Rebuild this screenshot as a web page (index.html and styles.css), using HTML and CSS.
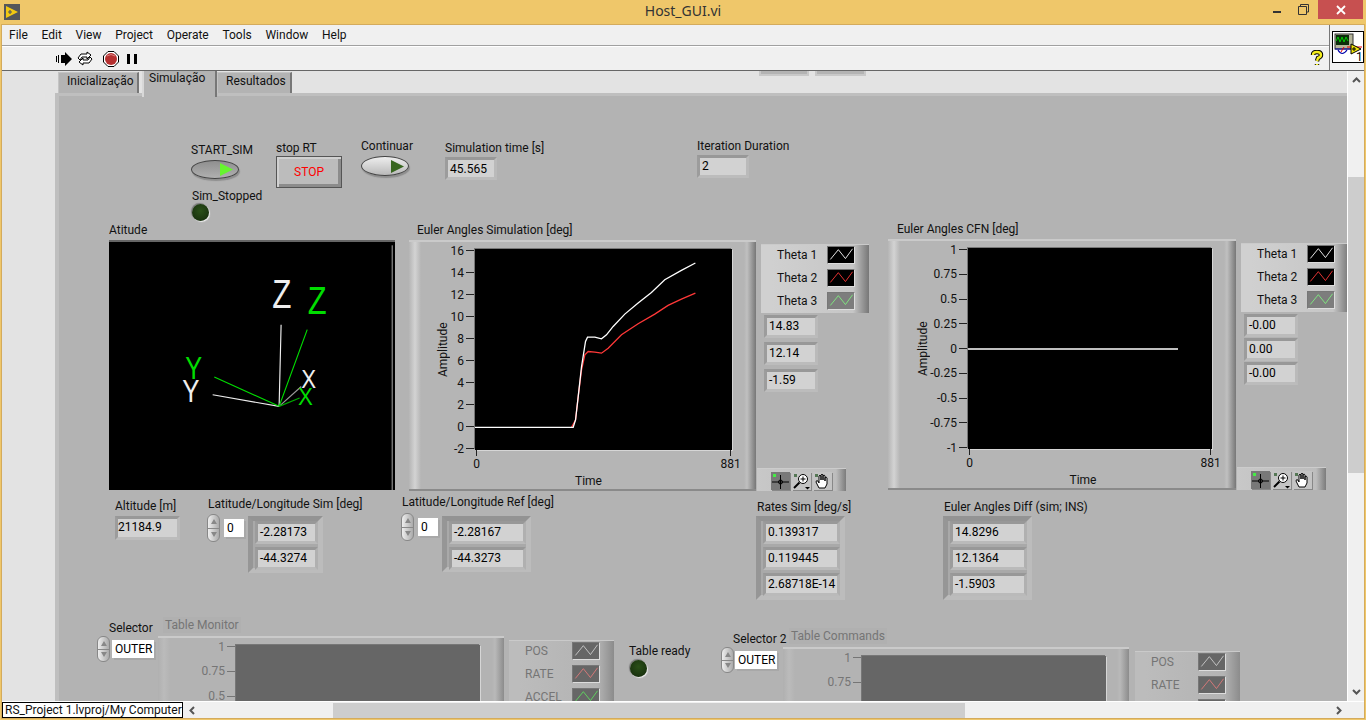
FILE: index.html
```html
<!DOCTYPE html>
<html lang="pt">
<head>
    <meta charset="UTF-8">
    <title>Host_GUI.vi</title>
    <link rel="stylesheet" href="styles.css">
</head>
<body>
<svg class="defs" width="0" height="0">
    <symbol id="zigzag" viewBox="0 0 28 18"><polyline points="2,14 11,3 19,13 27,2" fill="none" stroke="currentColor"/></symbol>
</svg>
<div class="window">
    <div class="titlebar">
        <svg class="app-icon" width="16" height="16" viewBox="0 0 16 16">
            <rect width="16" height="16" fill="#55565a"/>
            <path d="M2 2 L14 8 L2 14 Z" fill="#f2c811"/>
            <path d="M4 8 H8 M6 6 V10" stroke="#55565a" stroke-width="1.2"/>
        </svg>
        <div class="title">Host_GUI.vi</div>
        <div class="wincontrols">
            <div class="win-min"></div>
            <svg class="win-restore" width="11" height="11" viewBox="0 0 11 11">
                <path d="M2.5 2.5 V0.5 H10.5 V8 H8.5 M0.5 2.5 H8.5 V10.5 H0.5 Z" fill="none" stroke="#333"/>
            </svg>
            <div class="win-close">
                <svg width="10" height="10" viewBox="0 0 10 10"><path d="M1 1 L9 9 M9 1 L1 9" stroke="#fff" stroke-width="1.8"/></svg>
            </div>
        </div>
    </div>
    <div class="frame">
        <div class="topbars">
            <div class="bars-left">
                <div class="menubar">
                    <span>File</span><span>Edit</span><span>View</span><span>Project</span><span>Operate</span><span>Tools</span><span>Window</span><span>Help</span>
                </div>
                <div class="toolbar">
                    <svg class="tool-run" width="16" height="14" viewBox="0 0 16 14">
                        <path d="M5 3 H9 V0 L16 7 L9 14 V11 H5 Z" fill="#000"/>
                        <path d="M0 4 H1 V10 H0 Z M2 3 H3 V11 H2 Z" fill="#000"/>
                    </svg>
                    <svg class="tool-cycle" width="16" height="15" viewBox="0 0 16 15">
                        <path d="M1 7 L4 3 H10 V1 L14 4 L10 8 V6 H5 L3 9 Z M15 8 L12 12 H6 V14 L2 11 L6 7 V9 H11 L13 6 Z" fill="#fff" stroke="#000"/>
                    </svg>
                    <svg class="tool-stop" width="16" height="16" viewBox="0 0 16 16">
                        <path d="M5 .5 H11 L15.5 5 V11 L11 15.5 H5 L.5 11 V5 Z" fill="#fff" stroke="#000"/>
                        <circle cx="8" cy="8" r="6" fill="#b52f2f"/>
                        <path d="M4 5 Q8 2 12 5" fill="none" stroke="#d98080"/>
                    </svg>
                    <div class="tool-pause"><i></i><i></i></div>
                    <svg class="tool-help" width="14" height="17" viewBox="0 0 14 17">
                        <path d="M3 5 Q3 2 7 2 Q11 2 11 5 Q11 7 8 8 L7 11 M7 14 V15" fill="none" stroke="#000" stroke-width="4.4"/>
                        <path d="M3 5 Q3 2 7 2 Q11 2 11 5 Q11 7 8 8 L7 11 M7 14 V15" fill="none" stroke="#f5ee1e" stroke-width="2.4"/>
                    </svg>
                </div>
            </div>
            <div class="vi-slot">
                <svg class="vi-icon" width="32" height="32" viewBox="0 0 32 32">
                    <rect x=".5" y=".5" width="31" height="31" fill="#fff" stroke="#000"/>
                    <rect x="3" y="3" width="18" height="15" fill="#b5b59a" stroke="#333"/>
                    <rect x="4" y="4" width="13" height="10" fill="#0b2d0b"/>
                    <path d="M4 10 L6 6 L8 11 L10 6 L12 11 L14 6 L16 10" fill="none" stroke="#0c0"/>
                    <path d="M3 18 H19 M6 19 Q10 26 15 19" fill="none" stroke="#00a" stroke-width="1.2"/>
                    <path d="M9 21 L12 16 M15 16 H30" fill="none" stroke="#e00"/>
                    <path d="M19 13 L29 18 L19 23 Z" fill="#f2e60a" stroke="#000"/>
                    <path d="M20 18 H24 M22 16 V20" stroke="#000"/>
                    <text class="vi-num" x="24" y="30">1</text>
                </svg>
            </div>
        </div>
        <div class="middle">
            <div class="workspace">
                <div class="tabs">
                    <div class="tab tab-init">Inicialização</div>
                    <div class="tab tab-on">Simulação</div>
                    <div class="tab tab-res">Resultados</div>
                </div>
                <div class="tabpanel"></div>

                <div class="canvas">
                    <div class="clipped clip-a"></div>
                    <div class="clipped clip-b"></div>

                    <div class="lbl l-start">START_SIM</div>
                    <div class="oval oval-on"><svg width="13" height="13" viewBox="0 0 13 13"><path d="M0 0 L13 6.500 L0 13 Z" fill="#66f52e"/></svg></div>
                    <div class="lbl l-stopped">Sim_Stopped</div>
                    <div class="led led-stopped"></div>
                    <div class="lbl l-stoprt">stop RT</div>
                    <div class="stopbtn">STOP</div>
                    <div class="lbl l-cont">Continuar</div>
                    <div class="oval oval-off"><svg width="13" height="13" viewBox="0 0 13 13"><path d="M0 0 L13 6.500 L0 13 Z" fill="#38661f"/></svg></div>
                    <div class="lbl l-simtime">Simulation time [s]</div>
                    <div class="num n-simtime">45.565</div>
                    <div class="lbl l-iter">Iteration Duration</div>
                    <div class="num n-iter">2</div>

                    <div class="lbl l-att">Atitude</div>
                    <svg class="attitude" width="286" height="250" viewBox="27 60 858 750">
                        <line x1="880" y1="70" x2="880" y2="810" stroke="#aaa" stroke-width="3"/>
                        <g stroke-width="3.5">
                            <path d="M538 557 L544 310 M538 557 L337 522" stroke="#eee"/>
                            <path d="M538 557 L605 497" stroke="#999"/>
                            <path d="M538 557 L623 325 M538 557 L342 468" stroke="#0d0"/>
                            <path d="M538 557 L600 532" stroke="#0a0"/>
                        </g>
                        <text class="ax-w" x="517" y="261" font-size="124" textLength="58" lengthAdjust="spacingAndGlyphs">Z</text>
                        <text class="ax-g" x="625" y="279" font-size="118" textLength="57" lengthAdjust="spacingAndGlyphs">Z</text>
                        <text class="ax-w" x="245" y="544" font-size="95" textLength="52" lengthAdjust="spacingAndGlyphs">Y</text>
                        <text class="ax-g" x="254" y="474" font-size="95" textLength="51" lengthAdjust="spacingAndGlyphs">Y</text>
                        <text class="ax-w" x="605" y="503" font-size="80" textLength="45" lengthAdjust="spacingAndGlyphs">X</text>
                        <text class="ax-g" x="595" y="552" font-size="72" textLength="45" lengthAdjust="spacingAndGlyphs">X</text>
                    </svg>

                    <div class="lbl l-eusim">Euler Angles Simulation [deg]</div>
                    <div class="graph g-sim">
                        <div class="amp">Amplitude</div>
                        <div class="yaxis"><span>16</span><span>14</span><span>12</span><span>10</span><span>8</span><span>6</span><span>4</span><span>2</span><span>0</span><span>-2</span></div>
                        <div class="plot">
                            <svg width="257" height="201" viewBox="210 88 772 602" preserveAspectRatio="none">
                                <polyline class="tr-r" points="500,622 512,600 520,530 530,450 540,405 550,395 570,397 590,400 610,385 650,345 700,312 750,283 790,257 830,238 872,220"/>
                                <polyline class="tr-w" points="210,622 505,622 512,600 520,530 530,440 542,365 548,352 570,352 590,357 605,345 625,320 660,283 700,250 740,218 780,180 830,152 872,130"/>
                            </svg>
                        </div>
                        <div class="xaxis"><span>0</span><span>881</span></div>
                        <div class="xname">Time</div>
                    </div>
                    <div class="legend leg-sim">
                        <div class="leg-row"><span>Theta 1</span><svg class="sw sw-w"><use href="#zigzag"/></svg></div>
                        <div class="leg-row"><span>Theta 2</span><svg class="sw sw-r"><use href="#zigzag"/></svg></div>
                        <div class="leg-row"><span>Theta 3</span><svg class="sw sw-g"><use href="#zigzag"/></svg></div>
                    </div>
                    <div class="numcol col-sim">
                        <div class="num">14.83</div>
                        <div class="num">12.14</div>
                        <div class="num">-1.59</div>
                    </div>
                    <div class="palette pal-sim">
                        <div class="pbtn pbtn-on"><svg width="19" height="18" viewBox="0 0 19 18"><path d="M1 10 H18 M9.5 3 V17" stroke="#000"/><circle cx="9.5" cy="10" r="2" fill="none" stroke="#000"/><rect x="2" y="2" width="3" height="3" fill="#4e4"/></svg></div>
                        <div class="pbtn"><svg width="19" height="18" viewBox="0 0 19 18"><circle cx="11" cy="7" r="4.5" fill="#fff" stroke="#000"/><path d="M11 4.500 V9.500 M8.500 7 H13.500" stroke="#000"/><path d="M7.500 10.500 L2 16" stroke="#000" stroke-width="2"/><path d="M13 15 H18 L15.500 17.500 Z" fill="#000"/><rect x="2" y="2" width="3" height="3" fill="#575"/></svg></div>
                        <div class="pbtn"><svg width="19" height="18" viewBox="0 0 19 18"><path d="M6 16 L3 10 Q3 8 5 9 L6 11 V4 Q7 2.500 8 4 V8 V3 Q9 1.500 10 3 V8 V3.500 Q11.500 2.500 12 4 V9 V5.500 Q13.500 4.500 14 6 V12 L12 16 Z" fill="#fff" stroke="#000"/><rect x="2" y="2" width="3" height="3" fill="#575"/></svg></div>
                    </div>

                    <div class="lbl l-eucfn">Euler Angles CFN [deg]</div>
                    <div class="graph g-cfn">
                        <div class="amp">Amplitude</div>
                        <div class="yaxis"><span>1</span><span>0.75</span><span>0.5</span><span>0.25</span><span>0</span><span>-0.25</span><span>-0.5</span><span>-0.75</span><span>-1</span></div>
                        <div class="plot">
                            <svg width="244" height="201" viewBox="0 0 244 201"><line class="tr-w" x1="0" y1="101" x2="210" y2="101"/></svg>
                        </div>
                        <div class="xaxis"><span>0</span><span>881</span></div>
                        <div class="xname">Time</div>
                    </div>
                    <div class="legend leg-cfn">
                        <div class="leg-row"><span>Theta 1</span><svg class="sw sw-w"><use href="#zigzag"/></svg></div>
                        <div class="leg-row"><span>Theta 2</span><svg class="sw sw-r"><use href="#zigzag"/></svg></div>
                        <div class="leg-row"><span>Theta 3</span><svg class="sw sw-g"><use href="#zigzag"/></svg></div>
                    </div>
                    <div class="numcol col-cfn">
                        <div class="num">-0.00</div>
                        <div class="num">0.00</div>
                        <div class="num">-0.00</div>
                    </div>
                    <div class="palette pal-cfn">
                        <div class="pbtn pbtn-on"><svg width="19" height="18" viewBox="0 0 19 18"><path d="M1 10 H18 M9.5 3 V17" stroke="#000"/><circle cx="9.5" cy="10" r="2" fill="none" stroke="#000"/><rect x="2" y="2" width="3" height="3" fill="#4e4"/></svg></div>
                        <div class="pbtn"><svg width="19" height="18" viewBox="0 0 19 18"><circle cx="11" cy="7" r="4.5" fill="#fff" stroke="#000"/><path d="M11 4.500 V9.500 M8.500 7 H13.500" stroke="#000"/><path d="M7.500 10.500 L2 16" stroke="#000" stroke-width="2"/><path d="M13 15 H18 L15.500 17.500 Z" fill="#000"/><rect x="2" y="2" width="3" height="3" fill="#575"/></svg></div>
                        <div class="pbtn"><svg width="19" height="18" viewBox="0 0 19 18"><path d="M6 16 L3 10 Q3 8 5 9 L6 11 V4 Q7 2.500 8 4 V8 V3 Q9 1.500 10 3 V8 V3.500 Q11.500 2.500 12 4 V9 V5.500 Q13.500 4.500 14 6 V12 L12 16 Z" fill="#fff" stroke="#000"/><rect x="2" y="2" width="3" height="3" fill="#575"/></svg></div>
                    </div>

                    <div class="lbl l-alt">Altitude [m]</div>
                    <div class="num n-alt">21184.9</div>

                    <div class="lbl l-latsim">Latitude/Longitude Sim [deg]</div>
                    <div class="idx idx-sim"><div class="spin"></div><div class="idxbox">0</div></div>
                    <div class="array arr-latsim"><div class="num">-2.28173</div><div class="num">-44.3274</div></div>

                    <div class="lbl l-latref">Latitude/Longitude Ref [deg]</div>
                    <div class="idx idx-ref"><div class="spin"></div><div class="idxbox">0</div></div>
                    <div class="array arr-latref"><div class="num">-2.28167</div><div class="num">-44.3273</div></div>

                    <div class="lbl l-rates">Rates Sim [deg/s]</div>
                    <div class="array arr-rates"><div class="num">0.139317</div><div class="num">0.119445</div><div class="num">2.68718E-14</div></div>

                    <div class="lbl l-diff">Euler Angles Diff (sim; INS)</div>
                    <div class="array arr-diff"><div class="num">14.8296</div><div class="num">12.1364</div><div class="num">-1.5903</div></div>

                    <div class="lbl l-sel">Selector</div>
                    <div class="idx sel-a"><div class="spin"></div><div class="idxbox">OUTER</div></div>
                    <div class="lbl lbl-off l-mon">Table Monitor</div>
                    <div class="graph off g-mon">
                        <div class="amp"></div>
                        <div class="yaxis"><span>1</span><span>0.75</span><span>0.5</span><span></span><span></span><span></span><span></span><span></span><span></span></div>
                        <div class="plot"></div>
                    </div>
                    <div class="legend off leg-mon">
                        <div class="leg-row"><span>POS</span><svg class="sw sw-w"><use href="#zigzag"/></svg></div>
                        <div class="leg-row"><span>RATE</span><svg class="sw sw-r"><use href="#zigzag"/></svg></div>
                        <div class="leg-row"><span>ACCEL</span><svg class="sw sw-g"><use href="#zigzag"/></svg></div>
                    </div>

                    <div class="lbl l-ready">Table ready</div>
                    <div class="led led-ready"></div>

                    <div class="lbl l-sel2">Selector 2</div>
                    <div class="idx sel-b"><div class="spin"></div><div class="idxbox">OUTER</div></div>
                    <div class="lbl lbl-off l-cmd">Table Commands</div>
                    <div class="graph off g-cmd">
                        <div class="amp"></div>
                        <div class="yaxis"><span>1</span><span>0.75</span><span></span><span></span><span></span><span></span><span></span><span></span><span></span></div>
                        <div class="plot"></div>
                    </div>
                    <div class="legend off leg-cmd">
                        <div class="leg-row"><span>POS</span><svg class="sw sw-w"><use href="#zigzag"/></svg></div>
                        <div class="leg-row"><span>RATE</span><svg class="sw sw-r"><use href="#zigzag"/></svg></div>
                        <div class="leg-row"><svg class="sw sw-g sw-last"><use href="#zigzag"/></svg></div>
                    </div>
                </div>
            </div>
            <div class="vscroll">
                <svg class="arrow" width="9" height="6" viewBox="0 0 9 6"><path d="M1 5 L4.500 1.500 L8 5" fill="none" stroke="#555" stroke-width="2"/></svg>
                <div class="vthumb"></div>
                <svg class="arrow arrow-down" width="9" height="6" viewBox="0 0 9 6"><path d="M1 1 L4.500 4.500 L8 1" fill="none" stroke="#555" stroke-width="2"/></svg>
            </div>
        </div>
        <div class="bottombar">
            <div class="status">RS_Project 1.lvproj/My Computer</div>
            <svg class="arrow-left" width="6" height="9" viewBox="0 0 6 9"><path d="M5 1 L1.500 4.500 L5 8" fill="none" stroke="#555" stroke-width="2"/></svg>
            <div class="hthumb"></div>
            <svg class="arrow-right" width="6" height="9" viewBox="0 0 6 9"><path d="M1 1 L4.500 4.500 L1 8" fill="none" stroke="#555" stroke-width="2"/></svg>
        </div>
    </div>
</div>
</body>
</html>
```

FILE: styles.css
```css
* {
    box-sizing: border-box;
}
body {
    margin: 0;
    width: 1366px;
    height: 720px;
    overflow: hidden;
    font-family: Roboto, "Liberation Sans", sans-serif;
    font-size: 12px;
    color: #111;
}
.defs {
    position: absolute;
}
.window {
    width: 1366px;
    height: 720px;
    background-color: #efc76a;
    display: flex;
    flex-direction: column;
}

/* title bar */
.titlebar {
    height: 24px;
    flex: none;
    display: flex;
    align-items: flex-start;
    position: relative;
}
.app-icon {
    margin: 4px 0 0 4px;
}
.title {
    position: absolute;
    left: 0;
    right: 0;
    top: 1px;
    text-align: center;
    font-family: "Noto Sans", sans-serif;
    font-size: 14px;
    line-height: 20px;
    color: #333;
}
.wincontrols {
    margin-left: auto;
    display: flex;
    align-items: flex-start;
    margin-right: 3px;
    position: relative;
}
.win-min {
    width: 8px;
    height: 2px;
    background-color: #333;
    margin-top: 11px;
}
.win-restore {
    margin: 4px 9px 0 17px;
}
.win-close {
    width: 45px;
    height: 19px;
    background-color: #c75050;
    display: flex;
    align-items: center;
    justify-content: center;
}

.frame {
    flex: 1;
    margin: 0 2px 2px;
    box-shadow: 0 0 0 1px #d4ab5c;
    margin-top: 1px;
    display: flex;
    flex-direction: column;
    background-color: #f0f0f0;
    min-height: 0;
}
.topbars {
    height: 46px;
    flex: none;
    display: flex;
    border-bottom: 1px solid #666;
}
.bars-left {
    flex: 1;
    display: flex;
    flex-direction: column;
}
.menubar {
    height: 21px;
    display: flex;
    gap: 13.7px;
    padding-left: 7px;
    align-items: center;
    border-bottom: 1px solid #a0a0a0;
}
.toolbar {
    flex: 1;
    display: flex;
    align-items: center;
    padding-left: 54px;
    border-top: 1px solid #fff;
    position: relative;
}
.tool-run {
    margin-right: 5px;
}
.tool-stop {
    margin-left: 10px;
}
.tool-pause {
    display: flex;
    gap: 4px;
    margin-left: 8px;
}
.tool-pause i {
    display: block;
    width: 3px;
    height: 10px;
    background-color: #000;
}
.tool-help {
    margin-left: auto;
    margin-right: 5px;
}
.vi-slot {
    width: 35px;
    border-left: 1px solid #777;
    padding: 6px 0 0 2px;
}
.vi-icon {
    display: block;
}
.vi-num {
    font-size: 12px;
    fill: #000;
}

.middle {
    flex: 1;
    display: flex;
    min-height: 0;
}
.workspace {
    flex: 1;
    position: relative;
    overflow: hidden;
    background-color: #e3e3e3;
    display: flex;
    flex-direction: column;
}
.tabs {
    display: flex;
    height: 22px;
    flex: none;
    padding-left: 56px;
    align-items: flex-start;
    position: relative;
    z-index: 1;
}
.tab {
    height: 21px;
    padding-left: 8px;
    line-height: 17px;
    background-color: #b3b3b3;
    border-right: 2px solid #777;
    border-left: 1px solid #c4c4c4;
    border-top: 1px solid #c4c4c4;
    margin-top: 1px;
}
.tab-init {
    width: 81px;
}
.tab-on {
    width: 75px;
    height: 26px;
    margin: 0 0 0 3px;
    padding-left: 5px;
    line-height: 15px;
    border-left: 2px solid #d8d8d8;
    border-top: 0;
}
.tab-res {
    width: 75px;
}
.tabpanel {
    flex: 1;
    margin-left: 53px;
    background-color: #b3b3b3;
    border-top: 3px solid #bfbfbf;
    border-left: 4px solid #bfbfbf;
}

/* front panel, child coordinates are window coordinates */
.canvas {
    position: absolute;
    left: -2px;
    top: -71px;
    width: 1366px;
    height: 720px;
}
.canvas > * {
    position: absolute;
}
.clipped {
    top: 60px;
    height: 16px;
    background-color: #b3b3b3;
    border: 2px solid #c8c8c8;
}
.clip-a {
    left: 759px;
    width: 50px;
}
.clip-b {
    left: 815px;
    width: 51px;
}
.lbl {
    line-height: 16px;
    white-space: nowrap;
    margin-top: 1px;
}
.lbl-off {
    color: #757575;
    background-color: #b0b0b0;
    padding: 0 2px;
}
.l-start { left: 191px; top: 141px; }
.l-stopped { left: 192px; top: 187px; }
.l-stoprt { left: 276px; top: 139px; }
.l-cont { left: 361px; top: 137px; }
.l-simtime { left: 445px; top: 139px; }
.l-iter { left: 697px; top: 137px; }
.l-att { left: 109px; top: 221px; }
.l-eusim { left: 417px; top: 221px; }
.l-eucfn { left: 897px; top: 220px; }
.l-alt { left: 115px; top: 497px; }
.l-latsim { left: 208px; top: 495px; }
.l-latref { left: 402px; top: 493px; }
.l-rates { left: 757px; top: 498px; }
.l-diff { left: 944px; top: 498px; }
.l-sel { left: 109px; top: 619px; }
.l-mon { left: 163px; top: 616px; }
.l-ready { left: 629px; top: 642px; }
.l-sel2 { left: 733px; top: 630px; }
.l-cmd { left: 789px; top: 627px; }

.oval {
    border-radius: 50%;
    border: 1px solid #444;
    display: flex;
    align-items: center;
    justify-content: flex-end;
    box-shadow: 1px 2px 1px #8e8e8e;
}
.oval-on {
    left: 191px;
    top: 160px;
    width: 48px;
    height: 19px;
    background: linear-gradient(#8f8f8f, #b0b0b0);
    padding-right: 5px;
}
.oval-off {
    left: 361px;
    top: 156px;
    width: 48px;
    height: 20px;
    background: linear-gradient(#eee, #b9b9b9);
    padding-right: 4px;
}
.stopbtn {
    left: 276px;
    top: 156px;
    width: 66px;
    height: 32px;
    border: 1px solid #555;
    background-color: #bcbcbc;
    box-shadow: inset 2px 2px 0 #d0d0d0, inset -3px -3px 0 #8c8c8c;
    color: #f00;
    text-align: center;
    line-height: 30px;
}
.led {
    width: 17px;
    height: 17px;
    border-radius: 50%;
    background: radial-gradient(circle at 50% 40%, #2a5018, #14280c);
    box-shadow: 1px 1px 1px #eee, -1px -1px 1px #777;
}
.led-stopped { left: 192px; top: 204px; }
.led-ready { left: 630px; top: 660px; }

.num {
    background-color: #d2d2d2;
    border: 3px solid;
    border-color: #989898 #bababa #bcbcbc #9c9c9c;
    height: 23px;
    line-height: 17px;
    padding-left: 2px;
    color: #000;
    white-space: nowrap;
}
.n-simtime { left: 445px; top: 157px; width: 52px; line-height: 18px; }
.n-iter { left: 697px; top: 155px; width: 52px; }
.n-alt { left: 115px; top: 516px; width: 65px; height: 24px; padding-left: 0; }

.attitude {
    left: 109px;
    top: 240px;
    background-color: #000;
    border-top: 2px solid #666;
}
.attitude text {
    font-family: "Liberation Sans", sans-serif;
}
.ax-w { fill: #eee; }
.ax-g { fill: #0d0; }

/* graphs */
.graph {
    display: grid;
    height: 251px;
    padding-top: 7px;
    grid-template-rows: 201px 23px 16px;
    border-top: 2px solid #cacaca;
    border-bottom: 2px solid #8a8a8a;
    background:
        linear-gradient(90deg, #b5b5b5, #d3d3d3 6px, #b5b5b5 12px, #b5b5b5 calc(100% - 12px), #c0c0c0 calc(100% - 9px), #777 100%);
}
.g-sim {
    left: 409px;
    top: 240px;
    width: 347px;
    padding-left: 24px;
    grid-template-columns: 20px 22px 257px;
}
.g-sim .xname {
    padding-right: 30px;
}
.g-cfn {
    left: 888px;
    top: 239px;
    width: 348px;
    padding-left: 25px;
    grid-template-columns: 20px 35px 244px;
}
.g-cfn .xname {
    padding-right: 14px;
}
.g-mon {
    left: 158px;
    top: 636px;
    width: 346px;
    padding-left: 25px;
    grid-template-columns: 20px 33px 244px;
}
.g-cmd {
    left: 783px;
    top: 647px;
    width: 346px;
    padding-left: 25px;
    grid-template-columns: 20px 34px 244px;
}
.amp {
    writing-mode: vertical-rl;
    transform: rotate(180deg);
    text-align: center;
    line-height: 20px;
}
.yaxis {
    display: flex;
    flex-direction: column;
    justify-content: space-between;
    align-items: flex-end;
    padding: 1px 1px 1px 0;
}
.yaxis span {
    height: 1px;
    display: flex;
    align-items: center;
    white-space: nowrap;
}
.yaxis span::after {
    content: "";
    width: 8px;
    height: 1px;
    margin-left: 2px;
    background-color: #222;
}
.plot {
    background-color: #000;
    box-shadow: 1px 1px 0 #d6d6d6, -1px -1px 0 #777;
}
.plot svg {
    display: block;
}
.tr-w,
.tr-r {
    fill: none;
    stroke-width: 1.3;
    vector-effect: non-scaling-stroke;
}
.tr-w { stroke: #fff; }
.tr-r { stroke: #ff3838; }
.xaxis {
    grid-column: 3;
    display: flex;
    justify-content: space-between;
    padding: 0 1px;
}
.xaxis span {
    width: 1px;
    display: flex;
    flex-direction: column;
    align-items: center;
    line-height: 16px;
    height: 22px;
}
.xaxis span::before {
    content: "";
    width: 1px;
    height: 6px;
    flex: none;
    background-color: #222;
}
.xname {
    grid-column: 3;
    text-align: center;
    line-height: 16px;
}

.legend {
    display: flex;
    flex-direction: column;
    gap: 5px;
    padding: 1px 14px 0 16px;
    background: linear-gradient(90deg, #d0d0d0 10px, #c6c6c6 calc(100% - 16px), #777 100%);
    border-top: 1px solid #cacaca;
}
.leg-row {
    height: 18px;
    flex: none;
    display: flex;
    justify-content: space-between;
    align-items: center;
}
.sw {
    width: 28px;
    height: 18px;
    border: 1px solid;
    border-color: #777 #ddd #ddd #777;
}
.sw-last {
    margin-left: auto;
}
.sw-w { background-color: #000; color: #fff; }
.sw-r { background-color: #000; color: #ff3838; }
.sw-g { background-color: #7d7d7d; color: #7fef7f; }
.leg-sim { left: 761px; top: 244px; width: 108px; height: 69px; }
.leg-cfn { left: 1241px; top: 243px; width: 108px; height: 69px; }

.off {
    color: #757575;
}
.g-mon .plot,
.g-cmd .plot {
    background-color: #666;
}
.off .sw-w { background-color: #666; color: #ccc; }
.off .sw-r { background-color: #666; color: #e07a7a; }
.off .sw-g { background-color: #666; color: #5fdc5f; }
.off .yaxis span::after {
    background-color: #757575;
}
.off.graph {
    background:
        linear-gradient(90deg, #b0b0b0, #bbb 6px, #b3b3b3 12px, #b3b3b3 calc(100% - 12px), #b9b9b9 calc(100% - 9px), #8c8c8c 100%);
}
.off.legend {
    background: linear-gradient(90deg, #bcbcbc 10px, #b3b3b3 calc(100% - 16px), #8c8c8c 100%);
}
.leg-mon { left: 509px; top: 640px; width: 105px; height: 80px; }
.leg-cmd { left: 1135px; top: 651px; width: 105px; height: 80px; }

.numcol {
    display: flex;
    flex-direction: column;
    gap: 4px;
    width: 54px;
}
.col-sim { left: 764px; top: 315px; }
.col-cfn { left: 1244px; top: 314px; gap: 1px; }

.palette {
    width: 89px;
    height: 23px;
    padding: 3px 14px 0;
    display: flex;
    gap: 2px;
    background: linear-gradient(90deg, #c8c8c8, #bdbdbd calc(100% - 10px), #7c7c7c 100%);
    border-top: 1px solid #ccc;
}
.pal-sim { left: 757px; top: 468px; }
.pal-cfn { left: 1237px; top: 467px; }
.pbtn {
    width: 19px;
    height: 18px;
    background-color: #c4c4c4;
    box-shadow: 1px 1px 0 #888;
}
.pbtn svg {
    display: block;
}
.pbtn-on {
    background-color: #787878;
}

.idx {
    display: flex;
    align-items: center;
    gap: 4px;
    height: 28px;
}
.spin {
    width: 13px;
    height: 100%;
    border-radius: 6px;
    border: 1px solid #888;
    background:
        linear-gradient(#888, #888) center / 100% 1px no-repeat,
        linear-gradient(90deg, #eee, #aaa);
    position: relative;
}
.spin::before,
.spin::after {
    content: "";
    position: absolute;
    left: 2.5px;
    border: 3px solid transparent;
}
.spin::before {
    top: 1px;
    border-bottom: 5px solid #888;
}
.spin::after {
    bottom: 1px;
    border-top: 5px solid #888;
}
.idxbox {
    background-color: #fff;
    color: #000;
    height: 18px;
    line-height: 18px;
    padding-left: 3px;
    box-shadow: 2px 2px 0 #a8a8a8;
}
.idx-sim { left: 207px; top: 514px; }
.idx-sim .idxbox { width: 20px; }
.idx-ref { left: 401px; top: 513px; }
.idx-ref .idxbox { width: 20px; }
.sel-a { left: 97px; top: 636px; height: 26px; gap: 2px; }
.sel-a .idxbox { width: 42px; }
.sel-b { left: 721px; top: 647px; height: 26px; gap: 1px; }
.sel-b .idxbox { width: 42px; }

.array {
    background-color: #a9a9a9;
    border: 5px solid;
    border-color: #939393 #bcbcbc #bcbcbc #969696;
    padding-left: 2px;
    display: flex;
    flex-direction: column;
    gap: 3px;
}
.array .num {
    height: 23px;
    border-color: #989898 #b0b0b0 #bababa #9c9c9c;
}
.arr-latsim { left: 248px; top: 516px; width: 75px; height: 57px; }
.arr-latref { left: 442px; top: 516px; width: 89px; height: 56px; }
.arr-rates { left: 756px; top: 516px; width: 89px; height: 84px; }
.arr-diff { left: 943px; top: 516px; width: 89px; height: 84px; }

/* scrollbars */
.vscroll {
    width: 17px;
    flex: none;
    background-color: #f0f0f0;
    border-left: 1px solid #fff;
    display: flex;
    flex-direction: column;
    align-items: center;
    padding-top: 6px;
}
.arrow {
    flex: none;
}
.vthumb {
    width: 16px;
    height: 296px;
    margin-top: 94px;
    background-color: #cdcdcd;
}
.arrow-down {
    margin-top: auto;
    margin-bottom: 6px;
}
.bottombar {
    height: 17px;
    flex: none;
    display: flex;
    align-items: center;
    border-top: 1px solid #fff;
    position: relative;
}
.status {
    width: 181px;
    height: 16px;
    background-color: #fff;
    border: 1px solid #000;
    line-height: 14px;
    padding-left: 2px;
    white-space: nowrap;
    overflow: hidden;
}
.arrow-left {
    margin-left: 6px;
}
.hthumb {
    width: 632px;
    height: 15px;
    margin-left: 138px;
    background-color: #cdcdcd;
}
.arrow-right {
    margin-left: auto;
    margin-right: 22px;
}
```
